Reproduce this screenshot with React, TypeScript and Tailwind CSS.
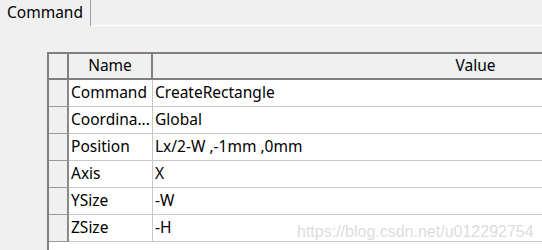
import React from "react";

const rows: [string, string][] = [
  ["Command", "CreateRectangle"],
  ["Coordina...", "Global"],
  ["Position", "Lx/2-W ,-1mm ,0mm"],
  ["Axis", "X"],
  ["YSize", "-W"],
  ["ZSize", "-H"],
];

export default function App() {
  return (
    <div className="relative w-[542px] h-[250px] overflow-hidden bg-[#f0f0f0] font-['Noto_Sans','Liberation_Sans',sans-serif] text-[15.5px] text-black">
      <div className="flex h-[26px]">
        <div className="w-[91px] border-r border-[#a0a0a0] pl-[7px] leading-[24px]">Command</div>
        <div className="flex-1 border-b border-white" />
      </div>
      <div className="ml-[47px] mt-[26px] h-[200px] w-[760px] border-l-2 border-t-2 border-[#808080] bg-white">
        <div className="flex h-[26px] bg-[#f0f0f0] border-b-2 border-[#808080]">
          <div className="w-[20px] border-r-2 border-[#808080]" />
          <div className="w-[84px] border-r-2 border-[#808080] text-center leading-[23px]">Name</div>
          <div className="w-[645px] text-center leading-[23px]">Value</div>
        </div>
        {rows.map(([n, v]) => (
          <div key={n} className="flex h-[27px]">
            <div className="w-[20px] bg-[#f0f0f0] border-r-2 border-b border-r-[#8a8a8a] border-b-[#9a9a9a]" />
            <div className="w-[84px] border-r border-b border-[#c8c8c8] pl-[2px] leading-[25px] whitespace-nowrap overflow-hidden">{n}</div>
            <div className="w-[645px] border-b border-[#c8c8c8] pl-[2px] leading-[25px] whitespace-nowrap">{v}</div>
          </div>
        ))}
      </div>
      <div className="absolute left-[297px] top-[220px] font-['Liberation_Sans',Arial,sans-serif] text-[16px] text-[#dcdcdc]">
        https://blog.csdn.net/u012292754
      </div>
    </div>
  );
}
